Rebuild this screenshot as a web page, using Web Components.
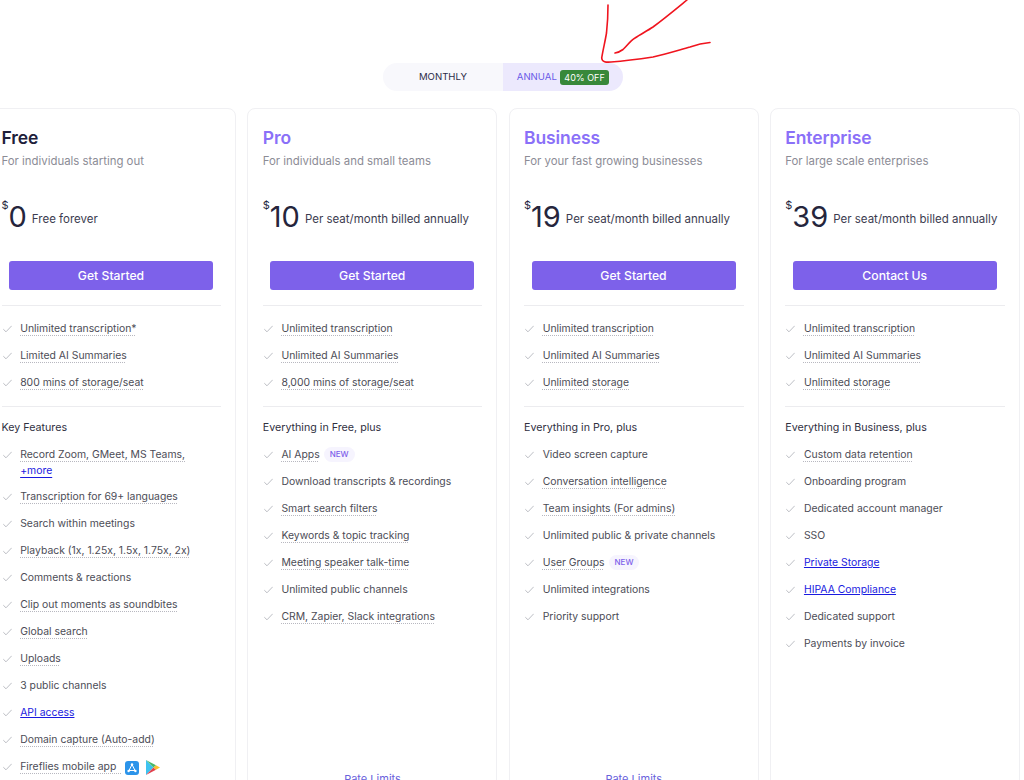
<!DOCTYPE html>
<html>
<head>
<meta charset="utf-8">
<title>Pricing</title>
<style>
  html, body { margin: 0; height: 780px; overflow: hidden; background: #fff; }
  body { font-family: Inter, "Liberation Sans", sans-serif; }
</style>
</head>
<body>
<pricing-page>
  <billing-toggle></billing-toggle>
  <plan-card name="Free" tone="dark" desc="For individuals starting out" price="0" note="Free forever" cta="Get Started">
    <plan-feature dotted>Unlimited transcription*</plan-feature>
    <plan-feature dotted>Limited AI Summaries</plan-feature>
    <plan-feature dotted>800 mins of storage/seat</plan-feature>
    <span slot="label">Key Features</span>
    <plan-feature slot="more" dotted style="margin-bottom:-1px">Record Zoom, GMeet, MS Teams,<br><a href="#">+more</a></plan-feature>
    <plan-feature slot="more" dotted>Transcription for 69+ languages</plan-feature>
    <plan-feature slot="more">Search within meetings</plan-feature>
    <plan-feature slot="more" dotted>Playback (1x, 1.25x, 1.5x, 1.75x, 2x)</plan-feature>
    <plan-feature slot="more">Comments &amp; reactions</plan-feature>
    <plan-feature slot="more" dotted>Clip out moments as soundbites</plan-feature>
    <plan-feature slot="more" dotted>Global search</plan-feature>
    <plan-feature slot="more" dotted>Uploads</plan-feature>
    <plan-feature slot="more">3 public channels</plan-feature>
    <plan-feature slot="more"><a href="#">API access</a></plan-feature>
    <plan-feature slot="more" dotted>Domain capture (Auto-add)</plan-feature>
    <plan-feature slot="more" dotted>Fireflies mobile app&nbsp;&nbsp;<store-icons slot="after"></store-icons></plan-feature>
  </plan-card>
  <plan-card name="Pro" desc="For individuals and small teams" price="10" note="Per seat/month billed annually" cta="Get Started" limits>
    <plan-feature dotted>Unlimited transcription</plan-feature>
    <plan-feature dotted>Unlimited AI Summaries</plan-feature>
    <plan-feature dotted>8,000 mins of storage/seat</plan-feature>
    <span slot="label">Everything in Free, plus</span>
    <plan-feature slot="more" dotted>AI Apps <new-tag slot="after"></new-tag></plan-feature>
    <plan-feature slot="more">Download transcripts &amp; recordings</plan-feature>
    <plan-feature slot="more" dotted>Smart search filters</plan-feature>
    <plan-feature slot="more" dotted>Keywords &amp; topic tracking</plan-feature>
    <plan-feature slot="more" dotted>Meeting speaker talk-time</plan-feature>
    <plan-feature slot="more">Unlimited public channels</plan-feature>
    <plan-feature slot="more" dotted>CRM, Zapier, Slack integrations</plan-feature>
  </plan-card>
  <plan-card name="Business" desc="For your fast growing businesses" price="19" note="Per seat/month billed annually" cta="Get Started" limits>
    <plan-feature dotted>Unlimited transcription</plan-feature>
    <plan-feature dotted>Unlimited AI Summaries</plan-feature>
    <plan-feature dotted>Unlimited storage</plan-feature>
    <span slot="label">Everything in Pro, plus</span>
    <plan-feature slot="more">Video screen capture</plan-feature>
    <plan-feature slot="more" dotted>Conversation intelligence</plan-feature>
    <plan-feature slot="more" dotted>Team insights (For admins)</plan-feature>
    <plan-feature slot="more">Unlimited public &amp; private channels</plan-feature>
    <plan-feature slot="more" dotted>User Groups <new-tag slot="after"></new-tag></plan-feature>
    <plan-feature slot="more">Unlimited integrations</plan-feature>
    <plan-feature slot="more">Priority support</plan-feature>
  </plan-card>
  <plan-card name="Enterprise" desc="For large scale enterprises" price="39" note="Per seat/month billed annually" cta="Contact Us">
    <plan-feature dotted>Unlimited transcription</plan-feature>
    <plan-feature dotted>Unlimited AI Summaries</plan-feature>
    <plan-feature dotted>Unlimited storage</plan-feature>
    <span slot="label">Everything in Business, plus</span>
    <plan-feature slot="more" dotted>Custom data retention</plan-feature>
    <plan-feature slot="more">Onboarding program</plan-feature>
    <plan-feature slot="more">Dedicated account manager</plan-feature>
    <plan-feature slot="more">SSO</plan-feature>
    <plan-feature slot="more"><a href="#">Private Storage</a></plan-feature>
    <plan-feature slot="more"><a href="#">HIPAA Compliance</a></plan-feature>
    <plan-feature slot="more">Dedicated support</plan-feature>
    <plan-feature slot="more">Payments by invoice</plan-feature>
  </plan-card>
</pricing-page>

<script>
class PricingPage extends HTMLElement {
  constructor() {
    super();
    this.attachShadow({ mode: "open" });
  }

  connectedCallback() {
    this.shadowRoot.innerHTML = /* html */`
    <style>
      :host { display: block; position: relative; }
      .top { display: flex; justify-content: center; padding: 63px 18px 17px 0; }
      .cards {
        display: grid;
        grid-template-columns: repeat(4, 250px);
        column-gap: 11.25px;
        margin-left: -14px;
      }
      svg { position: absolute; left: 595px; top: 0; }
    </style>
    <div class="top"><slot name="toggle"></slot></div>
    <div class="cards"><slot></slot></div>
    <svg width="125" height="70" viewBox="595 0 125 70" fill="none" stroke="#f0141e" stroke-width="1.6" stroke-linecap="round" stroke-linejoin="round">
      <path d="M608 5C608 14 607.5 24 606.5 33C605 42 603 50 601.7 58C602 62 606 62.5 611 62C625 61 640 59 653 57C666 54 679 50 690 47C697 44.5 704 43 710 42.5"/>
      <path d="M615 53C618 52.5 621 51 623 49.5C627 46 630 41 635 38C641 34 647 31 653 27C664 19 676 9 687 0"/>
    </svg>`;
    this.querySelector("billing-toggle").slot = "toggle";
  }
}

class BillingToggle extends HTMLElement {
  constructor() {
    super();
    this.attachShadow({ mode: "open" });
    this.shadowRoot.innerHTML = /* html */`
    <style>
      :host {
        display: flex;
        width: 240px;
        height: 28px;
        border-radius: 14px;
        overflow: hidden;
        font: 400 9.6px/28px Inter, "Liberation Sans", sans-serif;
      }
      div { flex: 1; display: flex; align-items: center; justify-content: center; }
      .month { background: #f8f8fc; color: #2c2c48; }
      .year { background: #ece9fd; color: #6a5ae8; gap: 3px; }
      b {
        font-weight: 400;
        font-size: 9px;
        line-height: 15px;
        color: #fff;
        background: #38883a;
        border-radius: 3px;
        padding: 0 4.5px;
      }
    </style>
    <div class="month">MONTHLY</div>
    <div class="year">ANNUAL <b>40% OFF</b></div>`;
  }
}

class PlanCard extends HTMLElement {
  constructor() {
    super();
    this.attachShadow({ mode: "open" });
  }

  connectedCallback() {
    const a = (n) => this.getAttribute(n) || "";
    const nameColor = a("tone") === "dark" ? "#20203a" : "#8a70f8";
    const limits = this.hasAttribute("limits") ? `<a class="limits" href="#">Rate Limits</a>` : "";
    this.shadowRoot.innerHTML = /* html */`
    <style>
      :host {
        display: flex;
        flex-direction: column;
        box-sizing: border-box;
        height: 710px;
        padding: 17px 14px 0 14.5px;
        border: 1px solid #f0f0f3;
        border-radius: 8px;
        background: #fff;
        font-family: Inter, "Liberation Sans", sans-serif;
      }
      h2 { margin: 0; font-size: 17.5px; line-height: 24px; font-weight: 600; letter-spacing: -0.1px; color: ${nameColor}; }
      .desc { font-size: 11.4px; line-height: 22px; color: #8c8c96; }
      .price { display: flex; align-items: center; height: 36px; margin-top: 27px; color: #25253c; }
      .price sup { align-self: flex-start; font-size: 11px; line-height: 12px; margin: 0; }
      .price strong { font-size: 29px; line-height: 36px; font-weight: 400; margin-right: 5px; }
      .price span { font-size: 11.5px; line-height: 16px; color: #3c3c50; margin-top: 4px; }
      .cta {
        display: block;
        margin: 26px 0 0 7.5px;
        width: 204px;
        height: 29px;
        box-sizing: border-box;
        border: 0;
        border-radius: 3px;
        background: #7d61ea;
        color: #fff;
        font: 500 12.2px/29px Inter, "Liberation Sans", sans-serif;
        padding: 0;
      }
      hr { border: 0; height: 1px; background: #ececef; margin: 0; }
      .first { margin-top: 15px; }
      .list { display: flex; flex-direction: column; gap: 11px; padding: 15px 0; }
      .label { font-size: 10.7px; line-height: 16px; color: #30303f; padding-top: 13px; }
      .more { padding-top: 11px; }
      .limits {
        margin-top: auto;
        margin-bottom: 30px;
        text-align: center;
        font-size: 11px;
        line-height: 16px;
        color: #6a62dc;
        text-decoration: none;
      }
    </style>
    <h2>${a("name")}</h2>
    <div class="desc">${a("desc")}</div>
    <div class="price"><sup>$</sup><strong>${a("price")}</strong><span>${a("note")}</span></div>
    <button class="cta">${a("cta")}</button>
    <hr class="first">
    <div class="list"><slot></slot></div>
    <hr>
    <div class="label"><slot name="label"></slot></div>
    <div class="list more"><slot name="more"></slot></div>
    ${limits}`;
  }
}

class PlanFeature extends HTMLElement {
  constructor() {
    super();
    this.attachShadow({ mode: "open" });
    this.shadowRoot.innerHTML = /* html */`
    <style>
      :host {
        display: flex;
        align-items: flex-start;
        gap: 8.7px;
        font-size: 10.4px;
        line-height: 16px;
        color: #4c4c56;
      }
      svg { flex: none; margin: 4px 0 0 1px; }
      .row { display: flex; align-items: flex-start; gap: 3px; }
      :host([dotted]) .text {
        text-decoration: underline dotted #b8b8c0;
        text-underline-offset: 3px;
      }
      ::slotted(a) { color: #1a1ae0; }
    </style>
    <svg width="9" height="8" viewBox="0 0 9 8" fill="none" stroke="#bcbec4" stroke-width="1">
      <path d="M.3 4.2 3 6.8 8.7 .8"/>
    </svg>
    <div class="row"><span class="text"><slot></slot></span><slot name="after"></slot></div>`;
  }
}

class NewTag extends HTMLElement {
  constructor() {
    super();
    this.attachShadow({ mode: "open" });
    this.shadowRoot.innerHTML = /* html */`
    <style>
      :host {
        display: block;
        margin-left: 1px;
        padding: 0 6px;
        border-radius: 8px;
        background: #f6f4fe;
        color: #7d61ea;
        font-size: 8px;
        font-weight: 500;
        line-height: 15px;
        height: 15px;
      }
    </style>NEW`;
  }
}

class StoreIcons extends HTMLElement {
  constructor() {
    super();
    this.attachShadow({ mode: "open" });
    this.shadowRoot.innerHTML = /* html */`
    <style>
      :host { display: flex; align-items: center; gap: 7px; margin: 1px 0 0 0; }
    </style>
    <svg width="14" height="14" viewBox="0 0 14 14">
      <rect width="14" height="14" rx="3" fill="#2c94ea"/>
      <path d="M7 3.5 4 9.5M7 3.5l3 6M3.4 9.5h7.2" stroke="#fff" stroke-width="1" fill="none"/>
      <g fill="#fff"><circle cx="7" cy="3.5" r="1.2"/><circle cx="3.6" cy="10" r="1.2"/><circle cx="10.4" cy="10" r="1.2"/></g>
    </svg>
    <svg width="14" height="15" viewBox="0 0 14 15">
      <path d="M0 0 7.5 7.5 0 15z" fill="#3ec3f0"/>
      <path d="M0 0 10 5.3 7.5 7.5z" fill="#48b96b"/>
      <path d="M0 15 10 9.7 7.5 7.5z" fill="#e2424e"/>
      <path d="M10 5.3 14 7.5 10 9.7 7.5 7.5z" fill="#fbc02d"/>
    </svg>`;
  }
}

customElements.define("pricing-page", PricingPage);
customElements.define("billing-toggle", BillingToggle);
customElements.define("plan-card", PlanCard);
customElements.define("plan-feature", PlanFeature);
customElements.define("new-tag", NewTag);
customElements.define("store-icons", StoreIcons);
</script>
</body>
</html>
